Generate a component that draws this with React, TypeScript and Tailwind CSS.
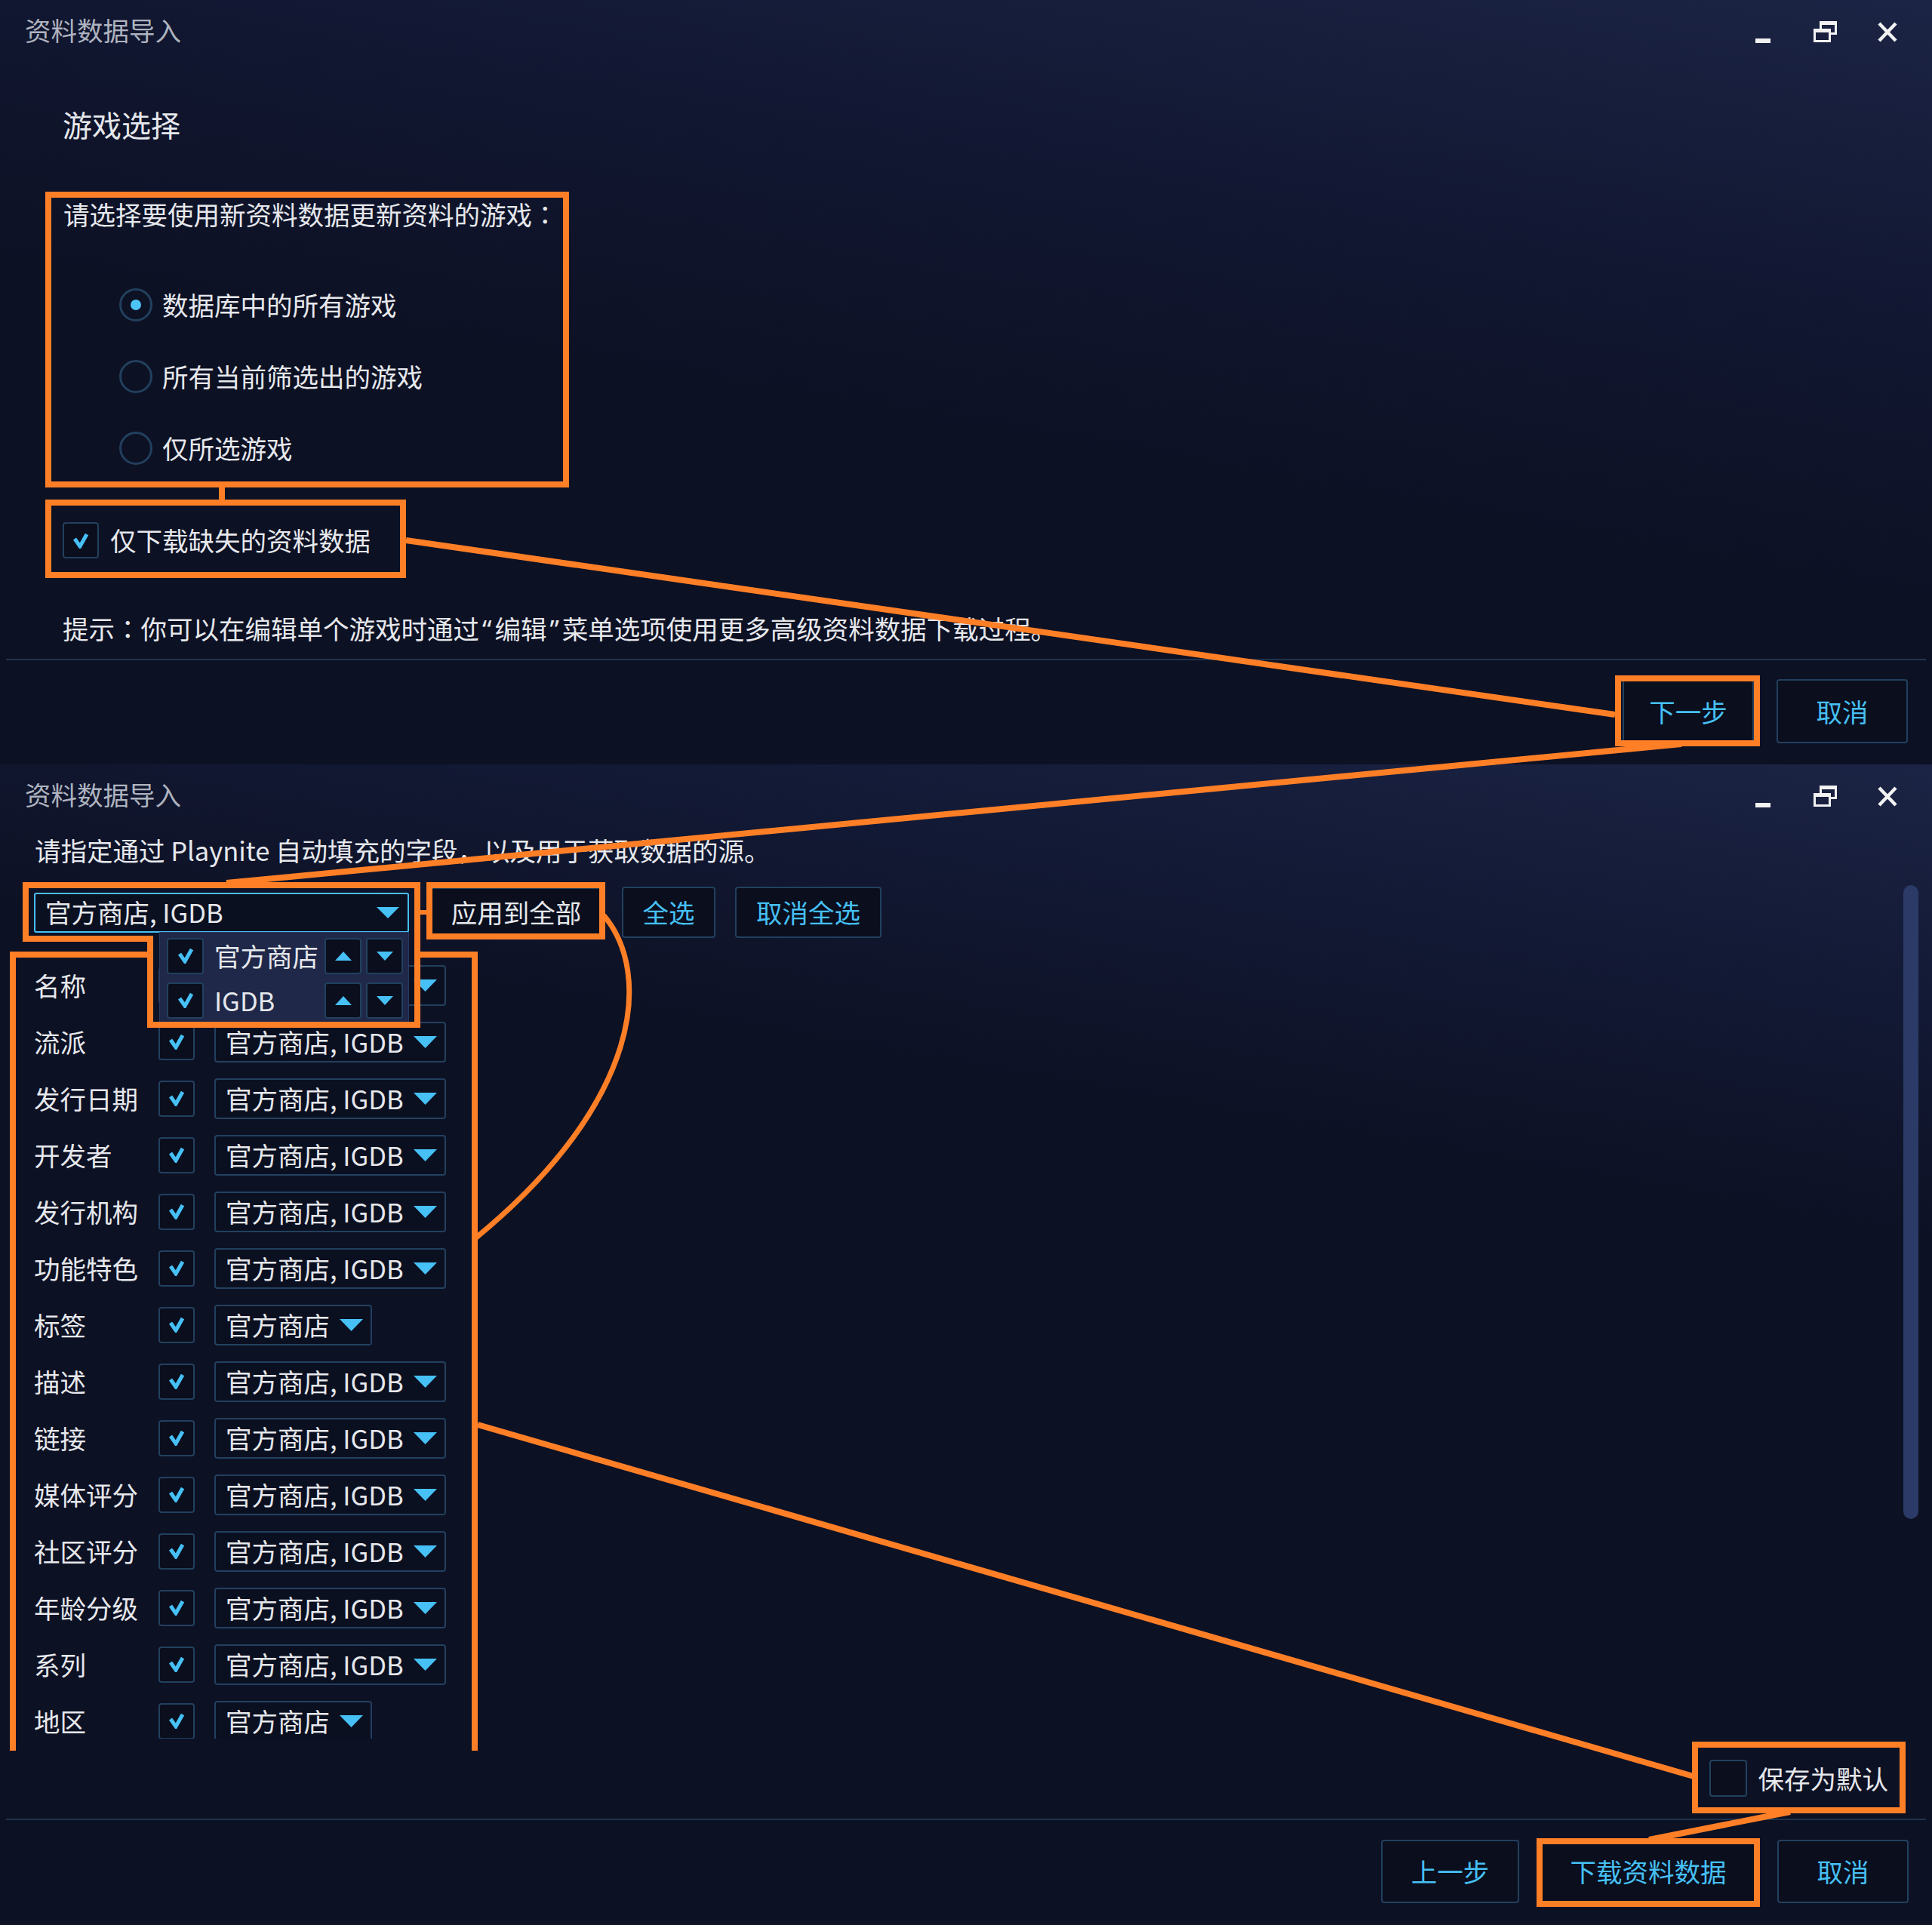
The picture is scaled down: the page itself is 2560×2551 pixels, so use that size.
import React from 'react';

const ACCENT = '#46c0f5';
const ORANGE = '#ff7f27';

// centred full-width colon, as the original UI font draws it
function Colon() {
  return <span className="font-['Noto_Sans_CJK_JP',sans-serif]">：</span>;
}

// narrow curly quotes
function Q({ c }: { c: string }) {
  return <span className="font-['Noto_Sans',sans-serif] px-[4px]">{c}</span>;
}

function Check() {
  return (
    <svg width="22" height="21" viewBox="0 0 22 21">
      <polyline points="3,8 10,18 19,2" fill="none" stroke={ACCENT} strokeWidth="5" />
    </svg>
  );
}

function Arrow({ w = 31, h = 16 }: { w?: number; h?: number }) {
  return (
    <svg width={w} height={h} viewBox={`0 0 ${w} ${h}`} className="shrink-0">
      <polygon points={`0,0 ${w},0 ${w / 2},${h}`} fill={ACCENT} />
    </svg>
  );
}

function CheckBox({ checked = true, size = 'w-[48px] h-[48px]' }: { checked?: boolean; size?: string }) {
  return (
    <div className={`flex items-center justify-center shrink-0 border-2 border-[#22405e] rounded-[4px] bg-[#0a0e1d] ${size}`}>
      {checked && <Check />}
    </div>
  );
}

function Radio({ checked }: { checked?: boolean }) {
  return (
    <div className="flex items-center justify-center w-[44px] h-[44px] rounded-full border-[3px] border-[#22405e] shrink-0">
      {checked && <div className="w-[14px] h-[14px] rounded-full bg-[#4cc4f5]" />}
    </div>
  );
}

function Button({ children, className = '' }: { children: React.ReactNode; className?: string }) {
  return (
    <div className={`flex items-center justify-center border-2 border-[#22405e] rounded-[4px] bg-[#0a0e1d] text-[34.5px] text-[#46c0f5] ${className}`}>
      {children}
    </div>
  );
}

function TitleBar() {
  return (
    <div className="flex items-start justify-between h-[89px]">
      <div className="ml-[33px] mt-[15px] text-[34.5px] leading-[48px] text-[#aeb3bf]">资料数据导入</div>
      <div className="flex items-center h-[30px] mt-[27px] mr-[45px]">
        <svg width="20" height="30">
          <rect x="0" y="24" width="20" height="6" fill="#f2f2f2" />
        </svg>
        <svg width="31" height="28" className="ml-[57px]">
          <rect x="9.5" y="1.5" width="20" height="15" fill="none" stroke="#f2f2f2" strokeWidth="3" />
          <rect x="8" y="0" width="23" height="5" fill="#f2f2f2" />
          <rect x="1.5" y="11.5" width="20" height="15" fill="#19213f" stroke="#f2f2f2" strokeWidth="3" />
          <rect x="0" y="10" width="23" height="5" fill="#f2f2f2" />
        </svg>
        <svg width="28" height="29" className="ml-[53px]">
          <path d="M3 3 L25 26 M25 3 L3 26" stroke="#f2f2f2" strokeWidth="4.5" />
        </svg>
      </div>
    </div>
  );
}

function TopWindow() {
  return (
    <div className="h-[1013px] flex flex-col bg-[linear-gradient(190deg,#1c2445_0%,#111731_30%,#0d1124_55%,#0d1124_100%)]">
      <TitleBar />
      <div className="ml-[83px] mt-[49px] text-[39px] leading-[52px]">游戏选择</div>
      <div className="ml-[84px] mt-[69px] text-[34.5px] leading-[48px] whitespace-nowrap">
        请选择要使用新资料数据更新资料的游戏<Colon />
      </div>
      <div className="mt-[49px] flex flex-col">
        {[
          { label: '数据库中的所有游戏', checked: true },
          { label: '所有当前筛选出的游戏' },
          { label: '仅所选游戏' },
        ].map((r) => (
          <div key={r.label} className="flex items-center h-[95px] ml-[158px] gap-[13px] text-[34.5px]">
            <Radio checked={r.checked} />
            <span>{r.label}</span>
          </div>
        ))}
      </div>
      <div className="flex items-center h-[48px] mt-[51px] ml-[83px] gap-[15px] text-[34.5px]">
        <CheckBox />
        <span>仅下载缺失的资料数据</span>
      </div>
      <div className="ml-[83px] mt-[68px] text-[34.5px] leading-[48px] whitespace-nowrap">
        提示<Colon />你可以在编辑单个游戏时通过<Q c="“" />编辑<Q c="”" />菜单选项使用更多高级资料数据下载过程。
      </div>
      <div className="mt-[15px] mx-[8px] h-[2px] bg-[#1e334d]" />
      <div className="mt-[25px] flex justify-end gap-[30px] pr-[32px]">
        <Button className="w-[174px] h-[85px]">下一步</Button>
        <Button className="w-[174px] h-[85px]">取消</Button>
      </div>
    </div>
  );
}

const fields: { label: string; short?: boolean }[] = [
  { label: '名称' },
  { label: '流派' },
  { label: '发行日期' },
  { label: '开发者' },
  { label: '发行机构' },
  { label: '功能特色' },
  { label: '标签', short: true },
  { label: '描述' },
  { label: '链接' },
  { label: '媒体评分' },
  { label: '社区评分' },
  { label: '年龄分级' },
  { label: '系列' },
  { label: '地区', short: true },
];

function SourceCombo({ short }: { short?: boolean }) {
  return (
    <div
      className={`flex items-center h-[54px] pl-[13px] pr-[10px] border-2 border-[#22405e] rounded-[4px] bg-[#0b1021] ${
        short ? 'w-[209px]' : 'w-[307px]'
      }`}
    >
      <span className="flex-1 whitespace-nowrap">{short ? '官方商店' : '官方商店, IGDB'}</span>
      <Arrow />
    </div>
  );
}

function SmallBtn({ up }: { up?: boolean }) {
  return (
    <div className="flex items-center justify-center w-[49px] h-[48px] border-2 border-[#22405e] rounded-[4px] bg-[#0a0e1d]">
      <svg width="22" height="12">
        <polygon points={up ? '0,12 22,12 11,0' : '0,0 22,0 11,12'} fill={ACCENT} />
      </svg>
    </div>
  );
}

function BottomWindow() {
  return (
    <div className="h-[1538px] flex flex-col bg-[linear-gradient(190deg,#1c2445_0%,#131a36_15%,#0d1124_32%,#0d1124_100%)]">
      <TitleBar />
      <div className="ml-[46px] text-[34.5px] leading-[48px] whitespace-nowrap">
        请指定通过 Playnite 自动填充的字段，以及用于获取数据的源。
      </div>
      <div className="flex">
        <div className="flex-1 flex flex-col">
          {/* toolbar */}
          <div className="mt-[25px] ml-[45px] h-[68px] flex items-center text-[34.5px]">
            <div className="relative w-[497px] h-[53px] flex items-center pl-[13px] pr-[11px] border-2 border-[#46c0f5] rounded-[3px] bg-[#0b1021]">
              <span className="flex-1 whitespace-nowrap">官方商店, IGDB</span>
              <Arrow w={30} h={15} />
              <div className="absolute left-[164px] top-[50px] z-10 w-[331px] h-[121px] flex flex-col gap-[11px] pt-[7px] bg-[#1f2849] border border-[#2c3a62]">
                {['官方商店', 'IGDB'].map((s) => (
                  <div key={s} className="flex items-center h-[48px] pl-[9px] pr-[7px]">
                    <CheckBox size="w-[49px] h-[48px]" />
                    <span className="ml-[14px] flex-1">{s}</span>
                    <SmallBtn up />
                    <div className="ml-[6px]">
                      <SmallBtn />
                    </div>
                  </div>
                ))}
              </div>
            </div>
            <div className="ml-[28px] w-[228px] h-[66px] flex items-center justify-center bg-[#0a0e1d] border-2 border-[#22405e] rounded-[4px]">
              应用到全部
            </div>
            <Button className="ml-[26px] w-[124px] h-[68px]">全选</Button>
            <Button className="ml-[26px] w-[194px] h-[68px]">取消全选</Button>
          </div>
          {/* field list */}
          <div className="mt-[25px] h-[1036px] overflow-hidden">
            {fields.map((f) => (
              <div key={f.label} className="flex items-center h-[75px] pl-[45px] text-[34.5px]">
                <span className="w-[165px] whitespace-nowrap">{f.label}</span>
                <CheckBox />
                <div className="ml-[26px]">
                  <SourceCombo short={f.short} />
                </div>
              </div>
            ))}
          </div>
        </div>
        <div className="w-[20px] h-[840px] mt-[23px] mr-[18px] rounded-full bg-[#2b3a66]" />
      </div>
      <div className="mt-[28px] h-[49px] flex items-center justify-end gap-[15px] pr-[58px] text-[34.5px]">
        <CheckBox checked={false} size="w-[50px] h-[49px]" />
        <span>保存为默认</span>
      </div>
      <div className="mt-[29px] mx-[8px] h-[2px] bg-[#1e334d]" />
      <div className="mt-[26px] flex justify-end gap-[27px] pr-[31px]">
        <Button className="w-[183px] h-[84px]">上一步</Button>
        <Button className="w-[288px] h-[84px]">下载资料数据</Button>
        <Button className="w-[174px] h-[84px]">取消</Button>
      </div>
    </div>
  );
}

function Annotations() {
  const s = { stroke: ORANGE, strokeWidth: 8, fill: 'none' } as const;
  return (
    <svg className="absolute left-0 top-0 pointer-events-none z-20" width="2560" height="2551">
      {/* top dialog */}
      <rect x="64" y="258" width="686" height="384" {...s} />
      <rect x="290" y="646" width="8" height="16" fill={ORANGE} />
      <rect x="64" y="666" width="470" height="96" {...s} />
      <line x1="538" y1="716" x2="2140" y2="947" {...s} />
      <rect x="2144" y="899" width="184" height="86" {...s} />
      <line x1="2228" y1="986" x2="300" y2="1170" {...s} />
      {/* bottom dialog */}
      <path d="M34 1173 H553 V1358 H199 V1244 H34 Z" {...s} />
      <rect x="557" y="1206" width="8" height="6" fill={ORANGE} />
      <rect x="569" y="1173" width="229" height="68" {...s} />
      <path d="M800 1213 C865 1290 850 1460 631 1640" stroke={ORANGE} strokeWidth="7" fill="none" />
      <path d="M17 2320 V1265 H199 M553 1265 H629 V2320" {...s} />
      <line x1="633" y1="1888" x2="2244" y2="2354" {...s} />
      <rect x="2246" y="2312" width="275" height="87" {...s} />
      <line x1="2372" y1="2401" x2="2185" y2="2438" {...s} />
      <rect x="2040" y="2440" width="288" height="83" {...s} />
    </svg>
  );
}

export default function App() {
  return (
    <div className="relative w-[2560px] h-[2551px] overflow-hidden font-['Noto_Sans_CJK_SC','Noto_Sans',sans-serif] text-[#e6e8ec]">
      <TopWindow />
      <BottomWindow />
      <Annotations />
    </div>
  );
}
